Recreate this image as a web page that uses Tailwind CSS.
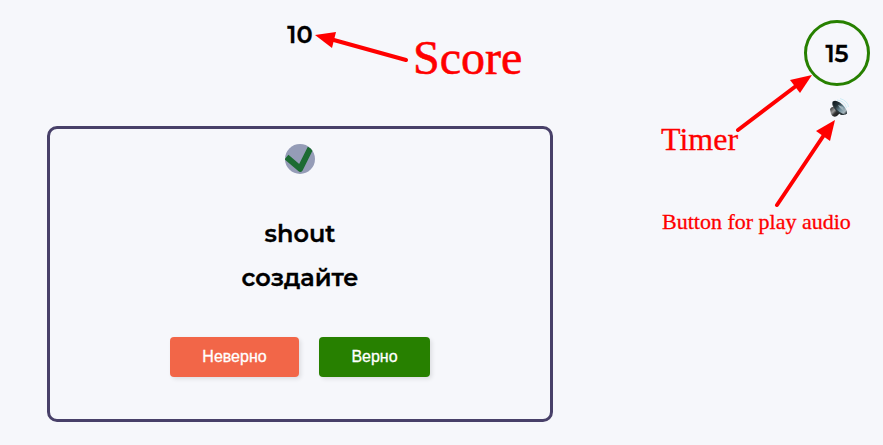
<!DOCTYPE html>
<html lang="ru">
<head>
<meta charset="utf-8">
<title>Sprint</title>
<script src="https://cdn.jsdelivr.net/npm/@tailwindcss/browser@4"></script>
</head>
<body class="relative flex h-[445px] w-[883px] justify-between overflow-hidden bg-[#f6f7fb] font-['Montserrat','Inter',sans-serif] text-black">
  <main class="ml-[47px] flex w-[506px] flex-col items-center pt-5">
    <div class="h-[106px] text-2xl leading-[30px] font-semibold [-webkit-text-stroke:0.3px_black]">10</div>
    <section class="flex h-[296px] w-full flex-col items-center rounded-[10px] border-3 border-[#484069] pt-[15px]">
      <svg class="size-[30px] shrink-0" viewBox="0 0 30 30">
        <defs><clipPath id="disc"><circle cx="15" cy="15" r="15"/></clipPath></defs>
        <circle cx="15" cy="15" r="15" fill="#959cb7"/>
        <path d="M1.500 13L15.200 24.700L25.500 4" fill="none" stroke="#1c6b32" stroke-width="6" stroke-linejoin="round" clip-path="url(#disc)"/>
      </svg>
      <h2 class="mt-[45px] text-2xl leading-[30px] font-semibold [-webkit-text-stroke:0.3px_black]">shout</h2>
      <h2 class="mt-[14px] text-2xl leading-[30px] font-semibold [-webkit-text-stroke:0.3px_black]">создайте</h2>
      <div class="mt-11 flex gap-5 font-['Liberation_Sans',sans-serif] text-base text-white">
        <button class="h-10 w-[129px] rounded bg-[#f26648] shadow-[2px_2px_4px_rgba(0,0,0,0.1)] [-webkit-text-stroke:0.3px_white]">Неверно</button>
        <button class="h-10 w-[111px] rounded bg-[#278000] shadow-[2px_2px_4px_rgba(0,0,0,0.1)] [-webkit-text-stroke:0.3px_white]">Верно</button>
      </div>
    </section>
  </main>
  <aside class="mr-[13px] flex w-[66px] flex-col items-center pt-5">
    <div class="flex size-[66px] items-center justify-center rounded-full border-3 border-[#278000] pt-0.5 text-2xl font-semibold [-webkit-text-stroke:0.3px_black]">15</div>
    <button class="mt-[10px] ml-1 size-6" aria-label="Play audio">
      <svg class="size-6" viewBox="0 0 24 24">
        <defs>
          <linearGradient id="cone" x1="0" y1="0" x2="1" y2="0"><stop offset="0" stop-color="#10191d"/><stop offset=".3" stop-color="#26343a"/><stop offset=".6" stop-color="#71909d"/><stop offset=".85" stop-color="#a9b8bf"/><stop offset="1" stop-color="#172125"/></linearGradient>
          <linearGradient id="magnet" x1="0" y1="0" x2="1" y2="1"><stop offset="0" stop-color="#222"/><stop offset=".4" stop-color="#999"/><stop offset=".58" stop-color="#333"/><stop offset="1" stop-color="#111"/></linearGradient>
        </defs>
        <path d="M3 13Q5 10 8 11L13 17L10 20Q6 22 4 18Z" fill="url(#magnet)"/>
        <path d="M6 5Q4 8 7 12L10 16L14 19Q19 19 20 17Z" fill="#2c373b"/>
        <ellipse cx="13" cy="11.500" rx="9" ry="3.800" transform="rotate(43 13 11.500)" fill="url(#cone)"/>
        <path d="M11 9L16 11L17 15L13 12Z" fill="#9fb3bc"/>
        <path d="M10 4Q18 5 19.500 12M13 2.500Q21 5 21.500 11" fill="none" stroke="#c4eaf4" stroke-width=".8"/>
      </svg>
    </button>
  </aside>

  <!-- Annotations over the screen -->
  <div class="pointer-events-none absolute inset-0 font-['Liberation_Serif',serif] whitespace-nowrap text-[#f00] [-webkit-text-stroke:0.3px_red]">
    <svg class="absolute inset-0" width="883" height="445" viewBox="0 0 883 445">
      <g stroke="#f00" stroke-width="4" stroke-linecap="round">
        <path d="M406 60L332 39.500M738 130L796 86M777 205L824 135"/>
      </g>
      <g fill="#f00">
        <path d="M315 35L336 32L332 48Z"/>
        <path d="M812 75L790 80L800 93Z"/>
        <path d="M835 120L816 131L830 141Z"/>
      </g>
    </svg>
    <span class="absolute top-[31px] left-[413px] text-[48px] leading-[54px] [-webkit-text-stroke:0.6px_red]">Score</span>
    <span class="absolute top-[121px] left-[661px] text-[32px] leading-9">Timer</span>
    <span class="absolute top-[209px] left-[662px] text-[22px] leading-[26px]">Button for play audio</span>
  </div>
</body>
</html>
